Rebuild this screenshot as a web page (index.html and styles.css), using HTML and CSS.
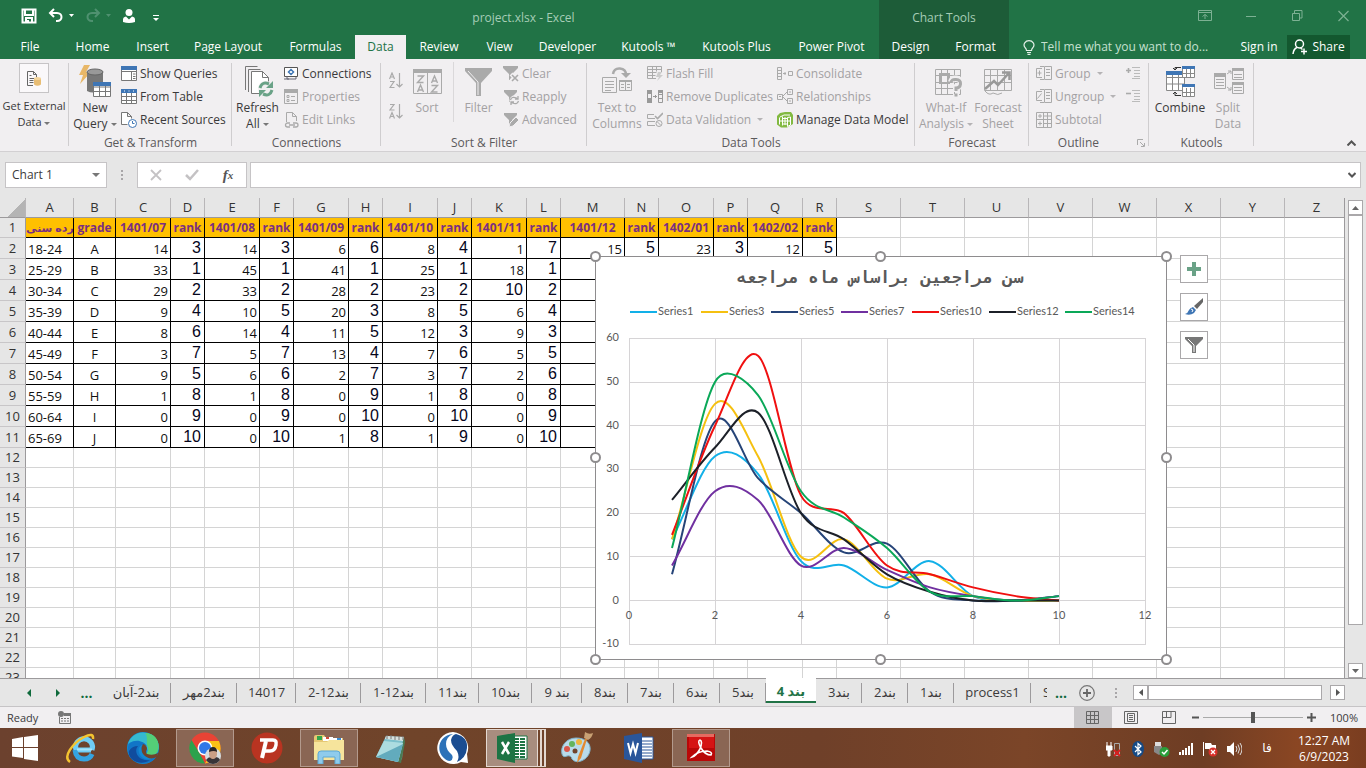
FILE: index.html
```html
<!DOCTYPE html>
<html lang="en">
  <head>
    <meta charset="UTF-8" />
    <meta name="viewport" content="width=device-width, initial-scale=1.0" />
    <title>project.xlsx - Excel</title>
    <link rel="stylesheet" href="styles.css">
  </head>
  <body>
    <header class="titlebar">
      <div class="quick">
        <button><svg width="16" height="16" viewBox="0 0 16 16"><path d="M1.500 1.500h13v13h-13zM4 1.500v5.500h8v-5.500M5 14.500v-4.500h6v4.500" fill="none" stroke="#fff" stroke-width="2"/><path d="M6 12h2v2h-2z" fill="#fff"/></svg></button>
        <button class="wide"><svg width="26" height="16" viewBox="0 0 26 16"><path d="M6 1 2 5l4 4M2 5h7c6 0 6 8 0 8H8" fill="none" stroke="#fff" stroke-width="2"/><path d="M21 6h5l-2.500 3z" fill="#fff"/></svg></button>
        <button class="wide"><svg width="26" height="16" viewBox="0 0 26 16"><path d="M10 1l4 4-4 4M14 5H7c-6 0-6 8 0 8h1" fill="none" stroke="#4f9170" stroke-width="2"/><path d="M21 6h5l-2.500 3z" fill="#4f9170"/></svg></button>
        <button><svg width="14" height="16" viewBox="0 0 14 16"><circle cx="7" cy="4.500" r="3.500" fill="#fff"/><path d="M1 14v-2.500Q1 9 4 8.500l3 3 3-3q3 .5 3 3V14q-6 2-12 0z" fill="#fff"/></svg></button>
        <button class="more"><svg width="6" height="8" viewBox="0 0 6 8"><path d="M0 1.500h6" stroke="#fff"/><path d="M0 4h6L3 7z" fill="#fff"/></svg></button>
      </div>
      <h1 class="title">project.xlsx - Excel</h1>
      <div class="chart-tools">Chart Tools</div>
      <div class="window-btns">
        <button><svg width="14" height="12" viewBox="0 0 14 12"><path d="M.5.5h13v10H.5zM.5 2.500h13M7 9V4.500M4.500 6.500 7 4.500l2.500 2" fill="none" stroke="#7db193"/></svg></button>
        <button><svg width="11" height="12" viewBox="0 0 11 12"><path d="M0 6.500h10" stroke="#7db193"/></svg></button>
        <button><svg width="11" height="12" viewBox="0 0 11 12"><path d="M.5 3.500h7v7h-7zM2.500 3V.5h7.500v7.500H8" fill="none" stroke="#7db193"/></svg></button>
        <button><svg width="11" height="12" viewBox="0 0 11 12"><path d="M.5 1l10 10M10.500 1l-10 10" stroke="#7db193" stroke-width="1.200"/></svg></button>
      </div>
    </header>

    <nav class="tabs">
      <a href="#">File</a>
      <a href="#">Home</a>
      <a href="#">Insert</a>
      <a href="#">Page Layout</a>
      <a href="#">Formulas</a>
      <a href="#" class="now">Data</a>
      <a href="#">Review</a>
      <a href="#">View</a>
      <a href="#">Developer</a>
      <a href="#">Kutools ™</a>
      <a href="#">Kutools Plus</a>
      <a href="#">Power Pivot</a>
      <a href="#" class="tool">Design</a>
      <a href="#" class="tool">Format</a>
      <label class="tell">
        <svg width="12" height="15" viewBox="0 0 12 15"><path d="M3.500 10.500Q3.500 9 2 7.500C-.5 4 2.500 .7 6 .7s6.500 3.300 4 6.800Q8.500 9 8.500 10.500zM4 12.500h4M4.500 14.300h3" fill="none" stroke="#e3f0e8" stroke-width="1.200"/></svg>
        <input type="text" placeholder="Tell me what you want to do...">
      </label>
      <a href="#" class="sign">Sign in</a>
      <button class="share"><svg width="16" height="16" viewBox="0 0 16 16"><circle cx="7.500" cy="5" r="4" fill="none" stroke="#fff" stroke-width="1.500"/><path d="M1 15q.5-5 4-6.500M8.500 9l2 1.500M9 12.500h6M12 9.500v6" fill="none" stroke="#fff" stroke-width="1.500"/></svg>Share</button>
    </nav>

    <section class="ribbon">
      <div class="group">
        <div class="group-body">
          <button class="big ext">
            <span class="ext-icon"><svg width="16" height="17" viewBox="0 0 16 17"><path d="M1.500 15.500v-14h6l3 3v3M7.500 1.500v3h3M1.500 15.500H7M3.500 5.500h2M3.500 8.500h5M3.500 10.500h4M3.500 12.500h4" fill="none" stroke="#666"/><path d="M8 8.500v6q3.500 2.500 7 0v-6z" fill="#e8bd74"/><ellipse cx="11.500" cy="8.500" rx="3.500" ry="1.500" fill="#f4d59b"/></svg></span>
            <span>Get External<br>Data <i class="down"></i></span>
          </button>
        </div>
      </div>

      <div class="group g-transform">
        <div class="group-body">
          <button class="big">
            <svg width="33" height="33" viewBox="0 0 33 33"><path d="M5 0h6L7 7h5L1 19l3-9H0z" fill="#e8b767"/><path d="M8 7v19q4 2 7 1.500V18h9V7z" fill="#777"/><ellipse cx="16" cy="7" rx="8" ry="3" fill="#999" stroke="#666"/><path d="M14.500 17.500h17v14h-17zM14.500 22h17M14.500 26.500h17M20.500 21v11M26.500 21v11" fill="#fff" stroke="#777"/><path d="M14 17h18v4H14z" fill="#3f76b5"/></svg>
            <span>New<br>Query <i class="down"></i></span>
          </button>
          <div class="list">
            <button class="small"><svg width="16" height="16" viewBox="0 0 16 16"><path d="M.5.5h15v14H.5z" fill="#fff" stroke="#777"/><path d="M0 0h16v4H0z" fill="#3f76b5"/><path d="M1 5.500h14M10.500 5v9M12 8h2.500M12 10.500h2.500M12 12.500h2.500" stroke="#777"/></svg>Show Queries</button>
            <button class="small"><svg width="16" height="16" viewBox="0 0 16 16"><path d="M.5.5h15v14H.5zM1 7.500h14M1 11.500h14M5.500 4v11M10.500 4v11" fill="#fff" stroke="#777"/><path d="M0 0h16v4H0z" fill="#3f76b5"/><path d="M3 2h1M7.500 2h1M12 2h1" stroke="#fff"/></svg>From Table</button>
            <button class="small"><svg width="16" height="16" viewBox="0 0 16 16"><path d="M6.500 12.500h-6V.5h6l4 4v2M6.500.5v4h4" fill="#fff" stroke="#777"/><circle cx="11.500" cy="11.500" r="4" fill="#fff" stroke="#3f76b5"/><path d="M11.500 9v2.500h2" fill="none" stroke="#3f76b5"/></svg>Recent Sources</button>
          </div>
        </div>
        <div class="caption">Get &amp; Transform</div>
      </div>

      <div class="group g-conn">
        <div class="group-body">
          <button class="big">
            <svg width="33" height="33" viewBox="0 0 33 33"><path d="M4.500 25V1.500h12M7.500 27V4.500h12" fill="none" stroke="#777"/><path d="M10.500 28.500v-22h11l6 6v16z" fill="#fff" stroke="#777"/><path d="M21.500 6.500v6h6" fill="none" stroke="#777"/><circle cx="25" cy="24" r="8" fill="#f1eff1"/><path d="M19 23q2-7 9-4M31 25q-2 7-9 4" fill="none" stroke="#6aa287" stroke-width="3"/><path d="M32 16v7h-7zM18 32v-7h7z" fill="#6aa287"/></svg>
            <span>Refresh<br>All <i class="down"></i></span>
          </button>
          <div class="list">
            <button class="small"><svg width="16" height="16" viewBox="0 0 16 16"><path d="M1.500 1.500h13v9h-13z" fill="#fff" stroke="#555"/><path d="M8 3.500 10.500 6 8 8.500 5.500 6z" fill="none" stroke="#3f76b5" stroke-width="1.500"/><path d="M4 10v3h9v-2M1 13h5" fill="none" stroke="#667"/></svg>Connections</button>
            <button class="small off"><svg width="16" height="16" viewBox="0 0 16 16"><path d="M1.500.5h13v14h-13z" fill="none" stroke="#aaa"/><path d="M1 0h14v4H1z" fill="#aaa"/><path d="M4 6.500h2v2H4zM4 10.500h2v2H4zM8 7.500h4M8 11.500h4" fill="none" stroke="#aaa"/></svg>Properties</button>
            <button class="small off"><svg width="16" height="16" viewBox="0 0 16 16"><path d="M3.500 10V.5h6l4 4V9M9.500.5v4h4" fill="none" stroke="#aaa"/><path d="M7 11H4.500a2 2 0 0 0 0 4H7M10 11h3a2 2 0 0 1 0 4h-3M6 13h6" fill="none" stroke="#aaa" stroke-width="1.300"/></svg>Edit Links</button>
          </div>
        </div>
        <div class="caption">Connections</div>
      </div>

      <div class="group g-sort">
        <div class="group-body">
          <div class="az">
            <button><svg width="14" height="17" viewBox="0 0 14 17"><path d="M.5 7 3 1l2.500 6M1.500 5h3M1 9.500h4L1 15.500h4.500M10.500 1v14M7.500 12l3 3 3-3" fill="none" stroke="#aaa" stroke-width="1.200"/></svg></button>
            <button><svg width="14" height="17" viewBox="0 0 14 17"><path d="M1 1.500h4L1 7h4.500M.5 15.500 3 9.500l2.500 6M1.500 13.500h3M10.500 1v14M7.500 12l3 3 3-3" fill="none" stroke="#aaa" stroke-width="1.200"/></svg></button>
          </div>
          <button class="big off b-sort">
            <svg width="33" height="33" viewBox="0 0 33 33"><path d="M2.500 4.500h28v24h-28zM16.500 4v24" fill="none" stroke="#aaa"/><path d="M2 4h29v4H2z" fill="#aaa"/><path d="M6.500 11h6l-6 6.500h6M6.500 27l3-7 3 7M7.500 25h4M20.500 18l3-7 3 7M21.500 16h4M20.500 20.500h6l-6 6.500h6" fill="none" stroke="#aaa" stroke-width="1.400"/></svg>
            <span>Sort</span>
          </button>
          <span class="line"></span>
          <button class="big off b-filter">
            <svg width="33" height="33" viewBox="0 0 33 33"><path d="M3 3h27v3L19 18v13h-5V18L3 6z" fill="#aaa"/><path d="M6 6l10 11v13" fill="none" stroke="#f1eff1"/></svg>
            <span>Filter</span>
          </button>
          <div class="list">
            <button class="small off"><svg width="16" height="16" viewBox="0 0 16 16"><path d="M0 0h15v2L9 8v6H6V8L0 2z" fill="#aaa"/><path d="M8 8l7 7M15 8l-7 7" stroke="#f1eff1" stroke-width="4"/><path d="M9 9l6 6M15 9l-6 6" stroke="#aaa" stroke-width="1.600"/></svg>Clear</button>
            <button class="small off"><svg width="16" height="16" viewBox="0 0 16 16"><path d="M1 1h13v2L9 8v5H6V8L1 3z" fill="#aaa"/><circle cx="11.500" cy="11.500" r="5" fill="#f1eff1"/><path d="M7.500 11q1-4 6-2l1 1M15.500 12q-1 4-6 2l-1-1M15 7v3h-3M8 16v-3h3" fill="none" stroke="#aaa" stroke-width="1.300"/></svg>Reapply</button>
            <button class="small off"><svg width="16" height="16" viewBox="0 0 16 16"><path d="M1 1h13v2L9 8v5H6V8L1 3z" fill="#aaa"/><path d="M6 15l1-4 6-6 3 3-6 6z" fill="#aaa" stroke="#f1eff1"/></svg>Advanced</button>
          </div>
        </div>
        <div class="caption">Sort &amp; Filter</div>
      </div>

      <div class="group g-tools">
        <div class="group-body">
          <button class="big off">
            <svg width="33" height="33" viewBox="0 0 33 33"><path d="M12 9q1-6 7-5.500t6 6.500" fill="none" stroke="#aaa" stroke-width="2.500"/><path d="M20 8h10l-5 5z" fill="#aaa"/><path d="M1.500 12.500h14v15h-14zM4 16.500h9M4 19.500h9M4 22.500h9M4 25.500h6M18.500 15.500h12v10h-12zM24.500 15v10M20 19.500h3M26 19.500h3M20 22.500h3M26 22.500h3" fill="none" stroke="#aaa"/><path d="M18 15h13v2H18z" fill="#aaa"/></svg>
            <span>Text to<br>Columns</span>
          </button>
          <div class="list">
            <button class="small off"><svg width="16" height="16" viewBox="0 0 16 16"><path d="M9 12.500H.5V.5h14V6M.5 3.500h14M.5 6.500h9M.5 9.500h8M5.500.5v12M9.500.5v5" fill="none" stroke="#aaa"/><path d="M11 6h4l-2 3h3l-6 6 2-4H9z" fill="#ccc"/></svg>Flash Fill</button>
            <button class="small off"><svg width="16" height="16" viewBox="0 0 16 16"><path d="M.5 1.500h4v12h-4zM11.500 1.500h4v12h-4zM11.500 5.500h4M11.500 9.500h4M6 7.500h4M8.500 6v3" fill="none" stroke="#999"/><path d="M0 1h5v4H0zM0 9h5v5H0zM11 1h5v3h-5z" fill="#999"/></svg>Remove Duplicates</button>
            <button class="small off"><svg width="16" height="16" viewBox="0 0 16 16"><path d="M7 2.500H.5v4H8M8 9.500H.5v4H8" fill="none" stroke="#aaa"/><path d="M8 4l2.500 2.500L16 1" fill="none" stroke="#aaa" stroke-width="1.600"/><circle cx="12" cy="11.500" r="3" fill="none" stroke="#aaa"/><path d="M10 9.500l4 4" stroke="#aaa"/></svg>Data Validation <i class="down far"></i></button>
          </div>
          <div class="list">
            <button class="small off"><svg width="16" height="16" viewBox="0 0 16 16"><path d="M.5 1.500h4v12h-4zM.5 4.500h4M.5 7.500h4M.5 10.500h4M6 7.500h3M8 6v3M11.500 5.500h4v4h-4z" fill="none" stroke="#aaa"/></svg>Consolidate</button>
            <button class="small off"><svg width="16" height="16" viewBox="0 0 16 16"><path d="M.5 5.500h5v5h-5zM10.500.5h5v5h-5zM10.500 9.500h5v5h-5zM6 7l4-4M6 8l4 4M2 7.500h2M12 3h2M12 12h2" fill="none" stroke="#aaa"/></svg>Relationships</button>
            <button class="small"><svg width="16" height="16" viewBox="0 0 16 16"><path d="M0 4 3 1l5-1h6l2 3v9l-6 3.500H4l-4-3z" fill="#82b941"/><path d="M2.500 5.500v7M2.500 9h11M5.500 4.500v9M13.500 5v8l-3 1.500v-9zM5.500 6.500h5M5.500 12h5M8 5v8M3 5l4-2h6" fill="none" stroke="#fff"/></svg>Manage Data Model</button>
          </div>
        </div>
        <div class="caption">Data Tools</div>
      </div>

      <div class="group g-forecast">
        <div class="group-body">
          <button class="big off">
            <svg width="33" height="33" viewBox="0 0 33 33"><path d="M5.500 4.500h25v25h-25zM11.500 4v25M17.500 4v25M24.500 4v25M5 10.500h25M5 17.500h25M5 23.500h25" fill="none" stroke="#aaa"/><path d="M10 9h9v9h-9z" fill="none" stroke="#aaa" stroke-width="2"/><path d="M21 17q1-4 5.500-3.500t4 5-4.500 4V27M26 29v3" fill="none" stroke="#f1eff1" stroke-width="6"/><path d="M21 18q0-4 5-3.500t4.500 4.500-4.500 4V26M26 28.500v3" fill="none" stroke="#aaa" stroke-width="3"/></svg>
            <span>What-If<br>Analysis <i class="down"></i></span>
          </button>
          <button class="big off">
            <svg width="33" height="33" viewBox="0 0 33 33"><path d="M2.500 4.500h27v21h-27zM8.500 4v21M15.500 4v21M22.500 4v21M2 10.500h27M2 17.500h27M3 26q4 5 8 2 5 3 9 0" fill="none" stroke="#aaa"/><path d="M3 24l9-8 4 4L27 8M20 7.500h7.500V15" fill="none" stroke="#999" stroke-width="2.500"/></svg>
            <span>Forecast<br>Sheet</span>
          </button>
        </div>
        <div class="caption">Forecast</div>
      </div>

      <div class="group g-outline">
        <div class="group-body">
          <div class="list">
            <button class="small off"><svg width="16" height="16" viewBox="0 0 16 16"><path d="M6 2.500H.5v9H6M3.500 4.500v5M1.500 7h4M8.500.5h7v13h-7zM10 3.500h4M10 6.500h4M10 9.500h4M4 .5h4M4 13.500h4" fill="none" stroke="#aaa"/></svg>Group <i class="down far"></i></button>
            <button class="small off"><svg width="16" height="16" viewBox="0 0 16 16"><path d="M6 2.500H.5v9H6M1.500 9.500l4-5M8.500.5h7v13h-7zM10 3.500h4M10 6.500h4M10 9.500h4M4 .5h4M4 13.500h4" fill="none" stroke="#aaa"/></svg>Ungroup <i class="down far"></i></button>
            <button class="small off"><svg width="16" height="16" viewBox="0 0 16 16"><path d="M.5.5h15v15H.5zM.5 7.500h15M7.500.5v15M11.500.5v15M7.500 4h8M7.500 11.500h8M2 4h4M4 2v4M2 11.500h4M4 9.500v4" fill="none" stroke="#aaa"/></svg>Subtotal</button>
          </div>
          <div class="list">
            <button class="small off"><svg width="16" height="16" viewBox="0 0 16 16"><path d="M0 4.500h5M2.500 2v5" stroke="#aaa" stroke-width="1.600"/><path d="M6 1.500h8M8 4.500h6M8 7.500h6M8 10.500h6M6 12.500h8" stroke="#bbb"/></svg></button>
            <button class="small off"><svg width="16" height="16" viewBox="0 0 16 16"><path d="M0 4.500h5" stroke="#aaa" stroke-width="1.600"/><path d="M6 1.500h8M8 4.500h6M8 7.500h6M8 10.500h6M6 12.500h8" stroke="#bbb"/></svg></button>
          </div>
        </div>
        <div class="caption">Outline<svg width="8" height="8" viewBox="0 0 8 8"><path d="M.5 6V.5H6M3 3l4 4M7.500 4v3.500H4" fill="none" stroke="#aaa"/></svg></div>
      </div>

      <div class="group g-kutools">
        <div class="group-body">
          <button class="big b-combine">
            <svg width="33" height="33" viewBox="0 0 33 33"><path d="M2.500 6.500h18v19h-18zM2.500 12.500h18M2.500 19h18M8.500 10v15M14.500 10v15" fill="#fff" stroke="#888"/><path d="M2 6h18v4H2z" fill="#3f76b5"/><path d="M18.500 1.500h12v11h-12zM18.500 8.500h12M22.500 4v8M26.500 4v8M18.500 20.500h12v11h-12zM18.500 27.500h12M22.500 23v8M26.500 23v8" fill="#fff" stroke="#888"/><path d="M18 1h13v3H18zM18 19h13v3H18z" fill="#3f76b5"/><path d="M17 2.500h-6V5M9 3l2 2 2-2M17 30.500h-6V27M9 29l2-2 2 2" fill="none" stroke="#333"/></svg>
            <span>Combine</span>
          </button>
          <button class="big off b-split">
            <svg width="33" height="33" viewBox="0 0 33 33"><path d="M2.500 8.500h11v15h-11zM4 14.500h8M4 17.500h8M4 20.500h8M20.500 3.500h11v11h-11zM22 9.500h8M22 12.500h8M20.500 17.500h11v11h-11zM22 22.500h8M22 25.500h8M15 9l4-3M16 6h3v3M15 22l4 3M16 25h3v-3" fill="none" stroke="#aaa"/><path d="M2 8h12v4H2zM20 3h12v3H20zM20 17h12v3H20z" fill="#aaa"/></svg>
            <span>Split<br>Data</span>
          </button>
        </div>
        <div class="caption">Kutools</div>
      </div>
      <button class="collapse"><svg width="9" height="6" viewBox="0 0 9 6"><path d="M.5 5.500l4-4 4 4" fill="none" stroke="#555" stroke-width="2"/></svg></button>
    </section>

    <section class="formula-bar">
      <div class="name-box">
        <select aria-label="Name box"><option>Chart 1</option></select>
        <i class="down"></i>
      </div>
      <span class="dots"></span>
      <div class="fx">
        <button><svg width="12" height="12" viewBox="0 0 12 12"><path d="M1 1l10 10M11 1 1 11" stroke="#c4c2c4" stroke-width="1.800"/></svg></button>
        <button><svg width="14" height="12" viewBox="0 0 14 12"><path d="M1 6l4 4 8-9" fill="none" stroke="#c4c2c4" stroke-width="2.500"/></svg></button>
        <button class="fx-btn">f<small>x</small></button>
      </div>
      <div class="formula">
        <input type="text" aria-label="Formula">
        <svg width="8" height="6" viewBox="0 0 8 6"><path d="M.5 1 4 4.500 7.500 1" fill="none" stroke="#555" stroke-width="2"/></svg>
      </div>
    </section>

    <main class="work">
      <div class="sheet">
        <table class="grid"></table>
        <svg class="chart" width="586" height="417" viewBox="588 250 586 417">
          <rect x="595.500" y="256.500" width="571" height="403" fill="#fff" stroke="#8e8c8e"/>
          <text class="chart-title" x="880" y="283" text-anchor="middle">سن مراجعین براساس ماه مراجعه</text>
          <g class="legend"></g>
          <g class="axes"></g>
          <g class="series"></g>
          <g class="handles"></g>
        </svg>
        <div class="chart-btns">
          <button><svg width="20" height="20" viewBox="0 0 20 20"><path d="M8 3h4v5h5v4h-5v5H8v-5H3V8h5z" fill="#6aa287"/></svg></button>
          <button><svg width="20" height="20" viewBox="0 0 20 20"><path d="M19 1v4l-6 7-3-3z" fill="#666"/><path d="M9 10l3 3-2 3q-4 3-9 1 3-1 4-4 1-2 4-3z" fill="#3f76b5"/><path d="M7 12l2 1-1 2" fill="none" stroke="#fff"/></svg></button>
          <button><svg width="20" height="20" viewBox="0 0 20 20"><path d="M1 2h18v2l-7 7v7H8v-7L1 4z" fill="#777"/><path d="M4 4l6 6v7" fill="none" stroke="#fff"/></svg></button>
        </div>
      </div>
      <div class="vscroll">
        <button><svg width="7" height="4" viewBox="0 0 7 4"><path d="M0 4 3.500 0 7 4z" fill="#666"/></svg></button>
        <div class="thumb"></div>
        <button><svg width="7" height="4" viewBox="0 0 7 4"><path d="M0 0h7L3.500 4z" fill="#666"/></svg></button>
      </div>
    </main>

    <nav class="sheets">
      <div class="sheet-nav">
        <button><svg width="4" height="8" viewBox="0 0 4 8"><path d="M4 0v8L0 4z" fill="#0f6a3c"/></svg></button>
        <button><svg width="4" height="8" viewBox="0 0 4 8"><path d="M0 0v8l4-4z" fill="#0f6a3c"/></svg></button>
        <button>...</button>
      </div>
      <div class="sheet-tabs">
        <a href="#" dir="auto">بند2-آبان</a>
        <a href="#" dir="auto">بند2مهر</a>
        <a href="#">14017</a>
        <a href="#" dir="auto">بند12-2</a>
        <a href="#" dir="auto">بند12-1</a>
        <a href="#" dir="auto">بند11</a>
        <a href="#" dir="auto">بند10</a>
        <a href="#" dir="auto">بند 9</a>
        <a href="#" dir="auto">بند8</a>
        <a href="#" dir="auto">بند7</a>
        <a href="#" dir="auto">بند6</a>
        <a href="#" dir="auto">بند5</a>
        <a href="#" dir="auto" class="now">بند 4</a>
        <a href="#" dir="auto">بند3</a>
        <a href="#" dir="auto">بند2</a>
        <a href="#" dir="auto">بند1</a>
        <a href="#">process1</a>
        <a href="#" class="cut">S</a>
      </div>
      <button class="next">...</button>
      <button class="add"><svg width="16" height="16" viewBox="0 0 16 16"><circle cx="8" cy="8" r="7.300" fill="none" stroke="#777" stroke-width="1.200"/><path d="M4 8h8M8 4v8" stroke="#666" stroke-width="1.800"/></svg></button>
      <span class="dots"></span>
      <div class="hscroll">
        <button><svg width="4" height="7" viewBox="0 0 4 7"><path d="M4 0v7L0 3.500z" fill="#555"/></svg></button>
        <div class="thumb"></div>
        <button><svg width="4" height="7" viewBox="0 0 4 7"><path d="M0 0v7l4-3.500z" fill="#555"/></svg></button>
      </div>
    </nav>

    <footer class="status">
      <span class="ready">Ready</span>
      <svg width="14" height="14" viewBox="0 0 14 14"><path d="M1.500 6v6.500h11v-9H7" fill="none" stroke="#777"/><path d="M6 2h7v3H6z" fill="#777"/><circle cx="3" cy="3" r="3" fill="#777"/><path d="M3 7.500h2M6 7.500h2M9 7.500h2M3 10h2M6 10h2M9 10h2" stroke="#777"/></svg>
      <div class="views">
        <button class="now"><svg width="14" height="13" viewBox="0 0 14 13"><path d="M.5.5h12v12H.5zM.5 4.500h12M.5 8.500h12M4.500.5v12M8.500.5v12" fill="none" stroke="#666"/></svg></button>
        <button><svg width="14" height="13" viewBox="0 0 14 13"><path d="M.5.5h13v12H.5zM3.500 2.500h7v8h-7zM5 4.500h4M5 6.500h4M5 8.500h4" fill="none" stroke="#666"/></svg></button>
        <button><svg width="14" height="13" viewBox="0 0 14 13"><path d="M.5.5h13v12H.5zM4.500.5v6M.5 6.500h8.500V.5" fill="none" stroke="#666"/></svg></button>
      </div>
      <button class="zoom-btn"><svg width="7" height="9" viewBox="0 0 7 9"><path d="M0 4.500h7" stroke="#555" stroke-width="2"/></svg></button>
      <input class="zoom" type="range" min="0" max="200" value="100" aria-label="Zoom">
      <button class="zoom-btn"><svg width="9" height="9" viewBox="0 0 9 9"><path d="M0 4.500h9M4.500 0v9" stroke="#555" stroke-width="2"/></svg></button>
      <span class="percent">100%</span>
    </footer>

    <div class="taskbar">
      <button class="start"><svg width="26" height="26" viewBox="0 0 26 26"><path d="M0 4l11-2v10H0zM12 2l14-2v12H12zM0 13h11v10L0 21.500zM12 13h14v13l-14-2z" fill="#fff"/></svg></button>
      <button class="app"><svg width="32" height="32" viewBox="0 0 32 32"><path d="M26 18H11M11 18a8.500 8.500 0 1 1 16 0" fill="none" stroke="#6fcdf6" stroke-width="5"/><path d="M10 18q1 9 9 9 6 0 8-5" fill="none" stroke="#35a4e2" stroke-width="5"/><path d="M12 17.500h15" stroke="#a5e2fb" stroke-width="2"/><path d="M5 30C-3 25 8 11 19 5q10-5 9 2" fill="none" stroke="#f4c430" stroke-width="2.500"/></svg></button>
      <button class="app"><svg width="32" height="32" viewBox="0 0 32 32"><circle cx="16" cy="16" r="16" fill="#1389d3"/><path d="M1 12C4 2 14-2 23 2c9 4 11 14 6 20q-4 3-10 0 3-3 0-8C14 8 5 8 1 12z" fill="#35b9cf"/><path d="M18 1c13 0 16 13 12 20q-5 4-11 1 4-4 1-9C20 6 20 3 18 1z" fill="#54cf78"/><path d="M2 12c6-6 15-3 18 2-6-3-11 2-7 9 3 5 10 6 16 2-4 6-12 8-19 5C2 26-1 18 2 12z" fill="#1175c7"/><path d="M11 14c-5 6 1 16 12 14-10 7-23-1-21-9q3-5 9-5z" fill="#104c9e"/><path d="M16 12q4 1 4 5-2 3 0 5 6 2 11-1l-1 4q-8 4-14-3-3-5 0-10z" fill="#70432b"/></svg></button>
      <button class="app open"><svg width="32" height="32" viewBox="0 0 32 32"><circle cx="16" cy="16" r="15.500" fill="#e94335"/><path d="M2.500 8 11 22l5 9.500A15.500 15.500 0 0 1 2.500 8z" fill="#2ba24c"/><path d="M16 9h14q5 12-5 20l-9 2.500L22 20z" fill="#fbc116"/><circle cx="16" cy="16" r="7.500" fill="#fff"/><circle cx="16" cy="16" r="6" fill="#2f78e8"/><circle cx="24" cy="24" r="8" fill="#d8dde0"/><path d="M17 28q2-3 5-3h4q4 0 5 3-3 4-7 4t-7-4z" fill="#383438"/><path d="M20 20q0-4 4-4t4 4v3q-1 4-4 4t-4-4z" fill="#c99f86"/><path d="M20 20q0-5 4-5t4 5q-3-2-8 0z" fill="#292527"/></svg></button>
      <button class="app"><svg width="32" height="32" viewBox="0 0 32 32"><circle cx="16" cy="16" r="15.500" fill="#b93421"/><path d="M9 8h13q4 0 3 5-1 6-6 6h-6" fill="none" stroke="#fff" stroke-width="3.500"/><path d="M15 9l-4 17" stroke="#fff" stroke-width="4"/></svg></button>
      <button class="app open"><svg width="32" height="32" viewBox="0 0 32 32"><path d="M1 5q0-2 2-2h8l2 3h17v22H1z" fill="#e5c773"/><path d="M4 4h5v4H4z" fill="#33a64d"/><path d="M10 5h10v4H10zM20 6h9v4h-9z" fill="#fff"/><path d="M13 5h3v2h-3z" fill="#d24c37"/><path d="M24 6h4v2h-4z" fill="#3d8dcf"/><path d="M1 10h13l2-2h15v20H1z" fill="#f6e49c"/><path d="M5 32V22q0-3 3-3h16q3 0 3 3v10h-5v-7H10v7z" fill="#8fcbec" stroke="#5ba8d5"/></svg></button>
      <button class="app"><svg width="32" height="32" viewBox="0 0 32 32"><path d="M11 4l18 1-2 22-4 3L1 25z" fill="#7cc0cc"/><path d="M11 4l18 1-1 4L10 7z" fill="#d7e2df"/><path d="M29 5l1 5-4 21-3-1z" fill="#4b7b55"/><path d="M9 9l19 2-5 19L1 25z" fill="#acdce0"/><path d="M1 25 24 14l4-2-5 18z" fill="#62abbd"/><path d="M12 3v4M16 3v4M20 4v4M24 4v4M28 4v4" stroke="#777"/></svg></button>
      <button class="app"><svg width="32" height="32" viewBox="0 0 32 32"><path d="M16 0a16 16 0 1 0 8 30l7 1-1-9A16 16 0 0 0 16 0z" fill="#fff"/><path d="M16 2C3 3-1 16 5 24q4 5 8 5 4-2 2-6-6-5-6-11Q9 5 16 2z" fill="#2d72b8"/><path d="M19 2q12 3 11 14-1 10-10 14 3-5 0-11-6-6-6-11 1-5 5-6z" fill="#1b4d91"/></svg></button>
      <button class="app stack"><svg width="32" height="32" viewBox="0 0 32 32"><path d="M17 4h14v23H17z" fill="#fff" stroke="#1d7444"/><path d="M18 7h11M18 10h11M18 13h11M18 16h11M18 19h11M18 22h11M18 25h11" stroke="#1d7444" stroke-width="2"/><path d="M23.500 5v21" stroke="#fff"/><path d="M1 4l18-3v30L1 27z" fill="#1d7444"/><path d="M6 10l7 12M13 10 6 22" stroke="#fff" stroke-width="2.500"/></svg></button>
      <button class="app"><svg width="32" height="32" viewBox="0 0 32 32"><path d="M15 6C5 6-1 15 1 22q1 4 5 2 4-1 5 3 3 4 9 2C32 25 34 6 15 6z" fill="#b9dbea" stroke="#7fb3ca"/><circle cx="6" cy="17" r="3" fill="#d9564a"/><circle cx="11" cy="12" r="3" fill="#63b45c"/><circle cx="18" cy="10" r="3" fill="#efb53e"/><circle cx="14" cy="19" r="2.500" fill="#70432b"/><path d="M26 7l-6 19-4 5 1-6 7-18z" fill="#e38930"/><path d="M24 0q4 3 8 1-1 5-5 7l-4-2z" fill="#c9a174"/></svg></button>
      <button class="app"><svg width="32" height="32" viewBox="0 0 32 32"><path d="M17 5h13v22H17z" fill="#fff" stroke="#2a569a"/><path d="M19 9h10M19 12h10M19 15h10M19 18h10M19 21h10M19 24h10" stroke="#2a569a"/><path d="M1 4l18-3v30L1 27z" fill="#2a569a"/><path d="M5 11l2.500 10L10 12l2.500 9L15 11" fill="none" stroke="#fff" stroke-width="2"/></svg></button>
      <button class="app open"><svg width="32" height="32" viewBox="0 0 32 32"><path d="M2 3l28-1v27H2z" fill="#b90808"/><path d="M2 2h27v3H2z" fill="#e66a60"/><path d="M4 5h25v11H4z" fill="#d51414"/><path d="M7 25q4-1 8-8 3-8 0-9-3 1 1 8 4 7 10 7 2-3-4-4-9 0-15 6z" fill="none" stroke="#fff" stroke-width="1.600"/></svg></button>
      <div class="tray">
        <button><svg width="16" height="16" viewBox="0 0 16 16"><path d="M0 5h6v4H0zM2 9h2v6H2zM1 1v4M5 1v4" fill="#fff" stroke="#fff"/><path d="M8.500 2.500h5v12h-5z" fill="none" stroke="#aaa"/><path d="M8 9l6 6M14 9l-6 6" stroke="#d82020" stroke-width="2"/></svg></button>
        <button><svg width="16" height="16" viewBox="0 0 16 16"><ellipse cx="8" cy="8" rx="6" ry="8" fill="#164a85"/><path d="M5 5l6 6-3 2.500v-11L11 5l-6 6" fill="none" stroke="#fff" stroke-width="1.200"/></svg></button>
        <button><svg width="16" height="16" viewBox="0 0 16 16"><path d="M1 1h6v4H1z" fill="#ddd"/><path d="M0 5h8v7l-3 2-5-3z" fill="#888"/><circle cx="10.500" cy="11" r="5" fill="#2a9e3a"/><path d="M8 11l2 2 3.500-4" fill="none" stroke="#fff" stroke-width="1.500"/></svg></button>
        <button><svg width="16" height="16" viewBox="0 0 16 16"><path d="M1 11h2v3H1zM4 9h2v5H4zM7 7h2v7H7zM10 5h2v9h-2zM13 2h2v12h-2z" fill="#fff"/></svg></button>
        <button><svg width="16" height="16" viewBox="0 0 16 16"><path d="M1 1h1v14H1zM3 2h6l1 2h4v6H8L7 8H3z" fill="#fff"/><circle cx="11" cy="11" r="4.500" fill="#d8302a"/><path d="M9 9l4 4M13 9l-4 4" stroke="#fff" stroke-width="1.300"/></svg></button>
        <button><svg width="16" height="16" viewBox="0 0 16 16"><path d="M1 5h3l4-4v14l-4-4H1z" fill="#fff"/><path d="M10 5q2 3 0 6M12 3.500q3 4.500 0 9M14 2q4 6 0 12" fill="none" stroke="#ddd"/></svg></button>
      </div>
      <button class="lang">فا</button>
      <div class="clock">12:27 AM<br>6/9/2023</div>
    </div>
    <script src="script.js"></script>
  </body>
</html>
```

FILE: styles.css
```css
* {
  margin: 0;
  padding: 0;
  box-sizing: border-box;
}
body {
  display: flex;
  flex-direction: column;
  height: 100vh;
  overflow: hidden;
  font: 12px/16px "Open Sans", "DejaVu Sans", sans-serif;
  color: #3b3a3b;
  background-color: #e6e6e6;
}
button,
input,
select {
  font: inherit;
  color: inherit;
  border: 0;
  background: none;
  outline: none;
}
button {
  display: flex;
  align-items: center;
  justify-content: center;
}
a {
  color: inherit;
  text-decoration: none;
}
svg {
  display: block;
  flex-shrink: 0;
}
.down {
  display: inline-block;
  border: 3px solid transparent;
  border-top: 3px solid #777;
  border-bottom: 0;
  vertical-align: middle;
}

/* title bar */
.titlebar {
  display: grid;
  grid-template-columns: 168px 711px 130px 1fr;
  height: 35px;
  background-color: #217346;
  color: #a6cdb6;
}
.quick {
  display: flex;
  align-items: center;
  gap: 11px;
  padding: 0 0 4px 21px;
}
.quick .more {
  margin: 4px 0 0 6px;
}
.title {
  font-size: 12px;
  font-weight: 400;
  line-height: 36px;
  text-align: center;
}
.chart-tools {
  background-color: #1d5c38;
  line-height: 36px;
  text-align: center;
}
.window-btns {
  display: flex;
  justify-content: flex-end;
  padding: 0 0 4px;
}
.window-btns button {
  width: 46px;
}

/* ribbon tabs */
.tabs {
  display: grid;
  grid-template-columns: 60px 65px 55px 96px 79px 51px 66px 55px 81px 81px 95px 95px 63px 67px 1fr 56px 63px;
  height: 24px;
  padding-right: 16px;
  background-color: #217346;
  color: #fff;
  line-height: 24px;
  text-align: center;
  white-space: nowrap;
}
.tabs .now {
  background-color: #f1eff1;
  color: #217346;
}
.tabs .tool {
  background-color: #1d5c38;
}
.tell {
  display: flex;
  align-items: center;
  gap: 6px;
  padding-left: 14px;
}
.tell input {
  width: 100%;
}
.tell input::placeholder {
  color: #c5e0d0;
  opacity: 1;
}
.share {
  gap: 4px;
  background-color: #13582f;
}

/* ribbon */
.ribbon {
  display: grid;
  grid-template-columns: 69px 163px 149px 206px 328px 114px 120px 105px 1fr;
  height: 93px;
  background-color: #f1eff1;
  border-bottom: 1px solid #d2d0d2;
}
.group {
  padding-top: 3px;
  background: linear-gradient(#cfcdcf, #cfcdcf) right 4px / 1px 83px no-repeat;
}
.group-body {
  display: flex;
  height: 73px;
}
.caption {
  display: flex;
  justify-content: center;
  align-items: center;
  color: #5c5a5c;
}
.big {
  flex-direction: column;
  justify-content: flex-start;
  gap: 2px;
  padding-top: 3px;
  white-space: nowrap;
  line-height: 16px;
}
.ext {
  width: 68px;
  padding-top: 1px;
  gap: 5px;
  font-size: 11px;
}
.ext-icon {
  display: flex;
  align-items: center;
  justify-content: center;
  width: 30px;
  height: 30px;
  border: 1px solid #c6c4c6;
  background-color: #faf8fa;
}
.small {
  height: 23px;
  gap: 3px;
  white-space: nowrap;
}
.list {
  display: flex;
  flex-direction: column;
  flex-shrink: 0;
  align-items: flex-start;
}
.off {
  color: #a3a1a3;
}
.off .down {
  border-top-color: #b5b3b5;
}
.off .far {
  margin-left: 3px;
}
.g-transform .big {
  width: 52px;
}
.g-conn .big {
  width: 51px;
}
.az {
  width: 23px;
  padding: 10px 0 0 8px;
}
.az button {
  height: 31px;
  align-items: flex-start;
}
.b-sort {
  width: 46px;
}
.line {
  width: 1px;
  height: 60px;
  margin-left: 3px;
  background-color: #dad8da;
}
.b-filter {
  width: 49px;
}
.g-tools .big {
  width: 60px;
}
.g-tools .list {
  width: 130px;
}
.g-forecast .group-body {
  padding-left: 5px;
}
.g-forecast .big {
  width: 52px;
}
.g-outline .group-body {
  padding-left: 7px;
}
.g-outline .list:first-child {
  width: 90px;
}
.g-outline .caption {
  gap: 38px;
  justify-content: flex-end;
  padding-right: 4px;
}
.g-kutools .group-body {
  padding-left: 3px;
}
.b-combine {
  width: 56px;
}
.b-split {
  width: 40px;
}
.collapse {
  align-self: end;
  justify-self: end;
  padding: 5px 10px;
}

/* formula bar */
.formula-bar {
  display: flex;
  height: 46px;
  padding: 10px 5px;
}
.name-box,
.fx,
.formula {
  display: flex;
  align-items: center;
  border: 1px solid #c6c4c6;
  background-color: #fff;
}
.name-box {
  width: 102px;
  padding: 0 6px;
}
.name-box select {
  flex: 1;
  appearance: none;
}
.name-box .down {
  border-width: 4px 4px 0;
}
.dots {
  width: 2px;
  height: 10px;
  margin: 8px 14px;
  background: repeating-linear-gradient(#a8a6a8 0 2px, transparent 2px 4px);
}
.fx {
  width: 110px;
}
.fx button {
  flex: 1;
}
.fx-btn {
  font: italic bold 15px "Liberation Serif", serif;
  color: #555;
}
.fx-btn small {
  font-size: 11px;
}
.formula {
  flex: 1;
  margin-left: 3px;
  padding-right: 4px;
}
.formula input {
  flex: 1;
}

/* grid */
.work {
  display: flex;
  flex: 1;
  min-height: 0;
}
.sheet {
  position: relative;
  flex: 1;
  overflow: hidden;
  border-right: 1px solid #9c9a9c;
}
.grid {
  table-layout: fixed;
  width: 1349px;
  border-spacing: 0;
  background-color: #fff;
  font-size: 13px;
  color: #111;
}
.grid th,
.grid td {
  height: 20px;
  line-height: 17px;
  overflow: hidden;
  white-space: nowrap;
  border-right: 1px solid #d4d4d4;
  border-bottom: 1px solid #d4d4d4;
}
.grid th {
  background-color: #e6e6e6;
  color: #333;
  font-weight: 400;
  text-align: center;
}
.grid thead th {
  border-right-color: #b8b6b8;
  border-bottom-color: #9c9a9c;
}
.grid tbody th {
  border-right-color: #9c9a9c;
  border-bottom-color: #c8c6c8;
}
.corner {
  background: linear-gradient(135deg, #e6e6e6 60%, #b4b4b4 60%);
}
.grid .tall th,
.grid .tall td {
  height: 21px;
}
.grid .cell {
  border-color: #000;
  text-align: right;
  vertical-align: bottom;
  padding-right: 2px;
}
.grid .head {
  background-color: #ffc000;
  color: #7a2f80;
  font-size: 12px;
  font-weight: 700;
  text-align: center;
  vertical-align: middle;
  padding: 0;
}
.grid .head:lang(fa) {
  font-size: 11px;
}
.grid .age {
  text-align: left;
  padding-left: 2px;
}
.grid .grade {
  text-align: center;
  padding: 0;
}
.grid .rank {
  font: 16px/20px "Liberation Sans", sans-serif;
  padding-right: 3px;
  color: #06061c;
}

/* chart floating over the cells */
.chart {
  position: absolute;
  left: 588px;
  top: 52px;
  font: 11px Lato, sans-serif;
  fill: #595959;
}
.chart-title {
  font: bold 17px "DejaVu Sans Mono", monospace;
}
.series path {
  fill: none;
  stroke-width: 2;
}
.axes path {
  fill: none;
  stroke: #d6d4d6;
}
.handles circle {
  fill: #fff;
  stroke: #8e8c8e;
  stroke-width: 2;
}
.chart-btns {
  position: absolute;
  left: 1180px;
  top: 57px;
  display: flex;
  flex-direction: column;
  gap: 10px;
}
.chart-btns button {
  width: 28px;
  height: 28px;
  border: 1px solid #aaa8aa;
  background-color: #fff;
}
.vscroll {
  display: flex;
  flex-direction: column;
  width: 21px;
  padding: 2px 3px 0;
}
.vscroll button,
.hscroll button,
.thumb {
  border: 1px solid #aaa8aa;
  background-color: #fff;
}
.vscroll button {
  height: 15px;
}
.vscroll .thumb {
  flex: 1;
  margin-bottom: 38px;
}

/* sheet tabs */
.sheets {
  display: flex;
  height: 29px;
  border-top: 1px solid #9c9a9c;
  border-bottom: 1px solid #c6c4c6;
}
.sheet-nav {
  display: flex;
  width: 101px;
  padding-left: 14px;
}
.sheet-nav button {
  width: 29px;
}
.sheet-nav button:last-child,
.next {
  font-size: 14px;
  font-weight: 700;
  color: #0f6a3c;
}
.sheet-tabs {
  display: grid;
  grid-template-columns: 70px 66px 59px 65px 65px 53px 53px 50px 46px 46px 46px 46px 50px 46px 46px 46px 77px 16px;
  line-height: 26px;
  font-size: 13px;
  text-align: center;
  white-space: nowrap;
}
.sheet-tabs a {
  height: 25px;
  background: linear-gradient(#9c9a9c, #9c9a9c) right 4px / 1px 20px no-repeat;
}
.sheet-tabs .now {
  margin-top: -1px;
  background: #fff;
  border-bottom: 2px solid #217346;
  color: #217346;
  font-weight: 700;
}
.sheet-tabs .cut {
  overflow: hidden;
  background: none;
  padding-left: 12px;
  text-align: left;
}
.next {
  width: 28px;
}
.add {
  width: 24px;
}
.sheets .dots {
  margin: 9px 16px;
}
.hscroll {
  display: flex;
  flex: 1;
  height: 15px;
  margin: 6px 21px 0 0;
}
.hscroll button {
  width: 15px;
}
.hscroll .thumb {
  flex: 1;
  margin-right: 8px;
}

/* status bar */
.status {
  display: flex;
  align-items: center;
  height: 21px;
  padding: 0 8px 0 7px;
  background-color: #f1eff1;
  font-size: 11px;
}
.ready {
  width: 51px;
}
.views {
  display: flex;
  height: 21px;
  margin: 0 4px 0 auto;
}
.views button {
  width: 38px;
}
.views .now {
  background-color: #c8c6c8;
}
.zoom {
  width: 100px;
  height: 13px;
  margin: 0 4px;
  appearance: none;
  background: linear-gradient(#aaa, #aaa) center / 100% 1px no-repeat;
}
.zoom::-webkit-slider-thumb {
  appearance: none;
  width: 4px;
  height: 11px;
  background-color: #555;
}
.percent {
  width: 42px;
  text-align: right;
}

/* taskbar */
.taskbar {
  display: flex;
  height: 40px;
  background: linear-gradient(90deg, #6c412e, #70442a 30%, #6f4029 60%, #7b4528 75%, #6e3d24 88%, #8a4623 95%, #7a3d20);
  color: #fff;
}
.start {
  width: 50px;
}
.app {
  width: 58px;
  margin: 1px 2px;
}
.open {
  border: 1px solid #b39a8d;
  background-color: #8a6654;
}
.stack {
  width: 52px;
  margin-right: 8px;
  border: 1px solid #e4d8d1;
  background-color: #a88d7f;
  box-shadow: 3px 0 0 -1px #70432b, 4px 0 0 #e4d8d1, 7px 0 0 -1px #70432b, 8px 0 0 #e4d8d1;
}
.tray {
  display: flex;
  margin-left: auto;
}
.tray button {
  width: 24px;
  padding-top: 2px;
}
.lang {
  width: 36px;
  padding-left: 6px;
}
.clock {
  width: 84px;
  padding-top: 5px;
  text-align: center;
  white-space: nowrap;
}
```

FILE: script.js
```js
var letters = 'ABCDEFGHIJKLMNOPQRSTUVWXYZ'.split('');
var widths = [48, 42, 55, 34, 55, 34, 55, 34, 55, 34, 55, 34, 64, 34, 55, 34, 55, 34];
var rows = [
  ['رده سنی', 'grade', '1401/07', 'rank', '1401/08', 'rank', '1401/09', 'rank', '1401/10', 'rank', '1401/11', 'rank', '1401/12', 'rank', '1402/01', 'rank', '1402/02', 'rank'],
  ['18-24', 'A', 14, 3, 14, 3, 6, 6, 8, 4, 1, 7, 15, 5, 23, 3, 12, 5],
  ['25-29', 'B', 33, 1, 45, 1, 41, 1, 25, 1, 18, 1],
  ['30-34', 'C', 29, 2, 33, 2, 28, 2, 23, 2, 10, 2],
  ['35-39', 'D', 9, 4, 10, 5, 20, 3, 8, 5, 6, 4],
  ['40-44', 'E', 8, 6, 14, 4, 11, 5, 12, 3, 9, 3],
  ['45-49', 'F', 3, 7, 5, 7, 13, 4, 7, 6, 5, 5],
  ['50-54', 'G', 9, 5, 6, 6, 2, 7, 3, 7, 2, 6],
  ['55-59', 'H', 1, 8, 1, 8, 0, 9, 1, 8, 0, 8],
  ['60-64', 'I', 0, 9, 0, 9, 0, 10, 0, 10, 0, 9],
  ['65-69', 'J', 0, 10, 0, 10, 1, 8, 1, 9, 0, 10]
];

// class of one cell in the filled block
function cellClass(r, c) {
  if (r === 0) return 'cell head';
  if (c === 0) return 'cell age';
  if (c === 1) return 'cell grade';
  // K4 has the rank font too
  if (c % 2 === 1 || (r === 3 && c === 10)) return 'cell rank';
  return 'cell';
}

var html = '<colgroup><col style="width:26px">';
for (var i = 0; i < letters.length; i++) {
  html += '<col style="width:' + (widths[i] || 64) + 'px">';
}
html += '</colgroup><thead><tr><th class="corner"></th>';
for (var i = 0; i < letters.length; i++) {
  html += '<th>' + letters[i] + '</th>';
}
html += '</tr></thead><tbody>';
for (var r = 0; r < 23; r++) {
  html += '<tr' + (r > 0 && r < rows.length ? ' class="tall"' : '') + '><th>' + (r + 1) + '</th>';
  for (var c = 0; c < letters.length; c++) {
    if (r < rows.length && c < widths.length) {
      var value = rows[r][c];
      var lang = r === 0 && c === 0 ? ' lang="fa"' : '';
      html += '<td class="' + cellClass(r, c) + '"' + lang + '>' + (value === undefined ? '' : value) + '</td>';
    } else {
      html += '<td></td>';
    }
  }
  html += '</tr>';
}
document.querySelector('.grid').innerHTML = html + '</tbody>';

// chart
var series = [
  { name: 'Series1', color: '#12b0e8', x: 630, data: [14, 33, 29, 9, 8, 3, 9, 1, 0, 0] },
  { name: 'Series3', color: '#f5c010', x: 701, data: [14, 45, 33, 10, 14, 5, 6, 1, 0, 0] },
  { name: 'Series5', color: '#264478', x: 771, data: [6, 41, 28, 20, 11, 13, 2, 0, 0, 1] },
  { name: 'Series7', color: '#7030a0', x: 841, data: [8, 25, 23, 8, 12, 7, 3, 1, 0, 1] },
  { name: 'Series10', color: '#f01010', x: 912, data: [15, 40, 56, 24, 20, 8, 6, 3, 1, 0] },
  { name: 'Series12', color: '#1c2028', x: 989, data: [23, 35, 43, 20, 14, 6, 2, 0, 0, 0] },
  { name: 'Series14', color: '#0aa858', x: 1065, data: [12, 50, 47, 25, 19, 12, 2, 1, 0, 1] }
];

function px(x) {
  return 629 + x * 43;
}
function py(y) {
  return 600.5 - y * 4.37;
}
function dist(a, b) {
  return Math.hypot(b[0] - a[0], b[1] - a[1]);
}

// smooth line through all the points, handles never longer than half a segment
function curve(data) {
  var p = data.map(function(v, i) {
    return [px(i + 1), py(v)];
  });
  var last = p.length - 1;
  var d = 'M' + p[0];
  for (var i = 0; i < last; i++) {
    var a = p[i], b = p[i + 1];
    var before = p[Math.max(i - 1, 0)];
    var after = p[Math.min(i + 2, last)];
    var half = dist(a, b) / 2;
    var k = Math.min(1 / 6, half / dist(before, b), half / dist(a, after));
    var k1 = i === 0 ? 1 / 3 : k;
    var k2 = i === last - 1 ? 1 / 3 : k;
    d += 'C' + [
      a[0] + (b[0] - before[0]) * k1, a[1] + (b[1] - before[1]) * k1,
      b[0] - (after[0] - a[0]) * k2, b[1] - (after[1] - a[1]) * k2,
      b[0], b[1]
    ];
  }
  return d;
}

var legend = '', lines = '', axes = '', handles = '';
series.forEach(function(s) {
  legend += '<path d="M' + s.x + ' 312h27" stroke="' + s.color + '" stroke-width="2"/>' +
    '<text x="' + (s.x + 28) + '" y="315">' + s.name + '</text>';
  lines += '<path d="' + curve(s.data) + '" stroke="' + s.color + '"/>';
});
for (var y = -10; y <= 60; y += 10) {
  axes += '<path d="M629 ' + (Math.floor(py(y)) + 0.5) + 'h517"/>' +
    '<text x="619" y="' + Math.round(py(y) + 3) + '" text-anchor="end">' + y + '</text>';
}
for (var x = 0; x <= 12; x += 2) {
  axes += '<path d="M' + (px(x) + 0.5) + ' 338v306"/>' +
    '<text x="' + px(x) + '" y="619" text-anchor="middle">' + x + '</text>';
}
[[595.5, 256.5], [880.5, 256.5], [1166.5, 256.5], [595.5, 457.5], [1166.5, 457.5], [595.5, 659.5], [880.5, 659.5], [1166.5, 659.5]].forEach(function(p) {
  handles += '<circle cx="' + p[0] + '" cy="' + p[1] + '" r="4.500"/>';
});
document.querySelector('.legend').innerHTML = legend;
document.querySelector('.axes').innerHTML = axes;
document.querySelector('.series').innerHTML = lines;
document.querySelector('.handles').innerHTML = handles;
```
